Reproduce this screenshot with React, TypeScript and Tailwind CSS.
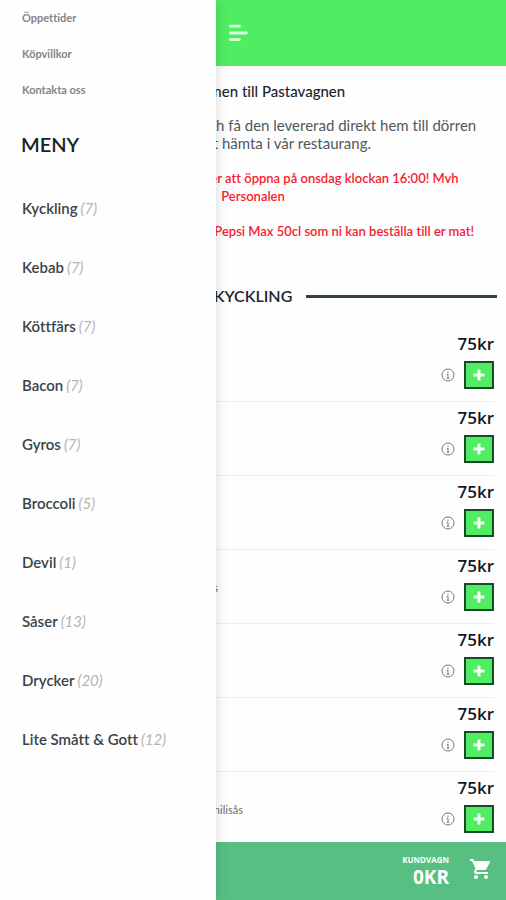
import React from "react";
import { MdShoppingCart } from "react-icons/md";

const infoLinks = ["Öppettider", "Köpvillkor", "Kontakta oss"];

const categories = [
  { name: "Kyckling", count: 7 },
  { name: "Kebab", count: 7 },
  { name: "Köttfärs", count: 7 },
  { name: "Bacon", count: 7 },
  { name: "Gyros", count: 7 },
  { name: "Broccoli", count: 5 },
  { name: "Devil", count: 1 },
  { name: "Såser", count: 13 },
  { name: "Drycker", count: 20 },
  { name: "Lite Smått & Gott", count: 12 },
];

const dishes = [
  { price: 75, note: "" },
  { price: 75, note: "" },
  { price: 75, note: "" },
  { price: 75, note: "sås", short: true },
  { price: 75, note: "" },
  { price: 75, note: "" },
  { price: 75, note: "chilisås" },
];

function MenuIcon() {
  return (
    <svg width="20" height="18" viewBox="0 0 20 18" fill="none" stroke="#dcffe0" strokeWidth="2.8" strokeLinecap="round" aria-hidden="true">
      <path d="M2.5 2.2H11.5M2.5 9H18.5M2.5 15.6H11.5" />
    </svg>
  );
}

function InfoIcon() {
  return (
    <svg width="14" height="14" viewBox="0 0 14 14" fill="none" stroke="#777" aria-hidden="true">
      <circle cx="7" cy="7" r="6" />
      <path d="M7 6.2V10.3M7 3.6V5M5.8 6.4H7M5.6 10.2H8.4" />
    </svg>
  );
}

function PlusIcon() {
  return (
    <svg width="12" height="12" viewBox="0 0 12 12" stroke="#f4fff4" strokeWidth="3" aria-hidden="true">
      <path d="M6 0.5V11.5M0.5 6H11.5" />
    </svg>
  );
}

function Drawer() {
  return (
    <aside className="absolute inset-y-0 left-0 z-10 w-[216px] overflow-hidden bg-[#fefefe] shadow-[0_0_12px_rgba(0,0,0,0.16)]">
      <nav aria-label="Information" className="pt-px">
        {infoLinks.map((label) => (
          <a key={label} href="#" className="flex h-9 items-center border-b border-[#fafafa] px-[22px] text-[11px] font-bold text-[#858585]">
            {label}
          </a>
        ))}
      </nav>
      <h2 className="mt-[23px] px-[21px] text-xl leading-6 font-semibold text-[#1c2328]">MENY</h2>
      <nav aria-label="Meny" className="mt-[23px]">
        {categories.map((c) => (
          <a key={c.name} href="#" className="flex h-[59px] items-center gap-[3px] border-b border-[#fafafa] px-[22px] text-[15px] font-semibold text-[#3a4347]">
            {c.name}
            <i className="font-normal text-[#b4b4b4]">({c.count})</i>
          </a>
        ))}
      </nav>
    </aside>
  );
}

export default function App() {
  return (
    <div className="relative flex h-screen flex-col overflow-hidden bg-[#fefefe] font-['Lato',sans-serif] [font-variant-ligatures:none]">
      <Drawer />
      <header className="flex h-[66px] shrink-0 items-center bg-[#50ec62] pl-[228px]">
        <button type="button" aria-label="Stäng meny">
          <MenuIcon />
        </button>
      </header>

      <main className="min-h-0 flex-1 overflow-hidden">
        <section className="px-5 pt-4 text-center">
          <h1 className="text-[15px] leading-[18px] font-medium text-[#1c2430]">Välkommen till Pastavagnen</h1>
          <p className="mt-4 text-[15px] leading-[18px] text-[#50585c]">
            Här kan ni beställa er mat och få den levererad direkt hem till dörren
            <br />
            eller välja att hämta i vår restaurang.
          </p>
          <p className="mt-[17px] text-[13px] leading-[18px] font-semibold text-[#f5222d]">
            Hejsan kära gäster! Vi kommer att öppna på onsdag klockan 16:00! Mvh
            <br />
            Personalen
          </p>
          <p className="mt-[17px] text-[13px] leading-[18px] font-semibold text-[#f5222d]">
            Idag har vi Fanta, Cola Zero och Pepsi Max 50cl som ni kan beställa till er mat!
          </p>
        </section>

        <div className="mt-11 flex items-center gap-3.5 px-[9px]">
          <span className="h-[3px] flex-1 bg-[#2f424a]" />
          <h2 className="text-base leading-6 font-semibold text-[#1c262e]">KYCKLING</h2>
          <span className="h-[3px] flex-1 bg-[#2f424a]" />
        </div>

        <ul className="mt-5 px-3">
          {dishes.map((dish, i) => (
            <li key={i} className="flex h-[74px] items-center justify-between border-b border-[#eeeeee] pb-2">
              <p className={`pt-3 text-right text-[11px] font-medium text-[#777] ${dish.short ? "w-[206px]" : "w-[231px]"}`}>{dish.note}</p>
              <div className="flex flex-col items-end gap-[5px]">
                <span className="font-['Open_Sans',sans-serif] text-[17px] leading-6 font-semibold text-[#14181e]">{dish.price}kr</span>
                <div className="flex items-center gap-[9px]">
                  <button type="button" aria-label="Information">
                    <InfoIcon />
                  </button>
                  <button type="button" aria-label="Lägg till" className="flex h-7 w-[30px] items-center justify-center border-2 border-[#174a26] bg-[#50ec62]">
                    <PlusIcon />
                  </button>
                </div>
              </div>
            </li>
          ))}
        </ul>
      </main>

      <footer className="flex h-[58px] shrink-0 items-center justify-end gap-5 bg-[#57bf82] pr-[13px] font-['Open_Sans',sans-serif] text-white">
        <div className="flex flex-col items-end font-bold">
          <span className="text-[8px] leading-3">KUNDVAGN</span>
          <span className="text-[19px] leading-[22px]">0KR</span>
        </div>
        <button type="button" aria-label="Kundvagn" className="pb-1">
          <MdShoppingCart size={24} />
        </button>
      </footer>
    </div>
  );
}
